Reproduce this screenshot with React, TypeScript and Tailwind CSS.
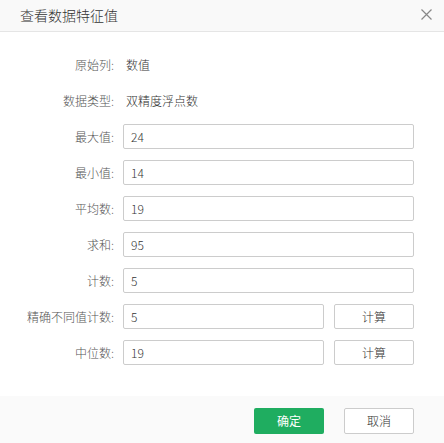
import React from "react";

const font = { fontFamily: '"Noto Sans CJK SC", "Noto Sans", sans-serif' };

function Label({ children }: { children: React.ReactNode }) {
  return <div className="w-[115px] shrink-0 text-right text-[12px] font-light text-[#555] pr-[1px]">{children}</div>;
}

function InputRow({ label, value, calc }: { label: string; value: string; calc?: boolean }) {
  return (
    <div className="flex h-[25px] items-center gap-[8px]">
      <Label>{label}</Label>
      <div className="flex flex-1 gap-[10px]">
        <div className="flex h-[25px] flex-1 items-center rounded-[2px] border border-[#cccccc] bg-white pl-[7px] text-[12px] font-light text-[#333]">
          {value}
        </div>
        {calc && (
          <button className="flex h-[25px] w-[80px] items-center justify-center rounded-[2px] border border-[#cccccc] bg-white text-[12px] font-light text-[#333]">
            计算
          </button>
        )}
      </div>
    </div>
  );
}

function TextRow({ label, value }: { label: string; value: string }) {
  return (
    <div className="flex h-[25px] items-center gap-[8px]">
      <Label>{label}</Label>
      <div className="pl-[3px] text-[12px] font-light text-[#333]">{value}</div>
    </div>
  );
}

export default function App() {
  return (
    <div className="flex h-[443px] w-[444px] flex-col bg-white" style={font}>
      <div className="flex h-[32px] items-center justify-between border-b border-[#e5e5e5] bg-[#f9f9f9] pl-[20px] pr-[12px]">
        <span className="text-[14px] font-light text-[#333]">查看数据特征值</span>
        <svg width="11" height="11" viewBox="0 0 11 11" className="mb-[2px]">
          <path d="M0.5 0.5 L10.5 10.5 M10.5 0.5 L0.5 10.5" stroke="#888" strokeWidth="1.2" />
        </svg>
      </div>
      <div className="flex flex-col gap-[11px] pl-0 pr-[30px] pt-[20px]">
        <TextRow label="原始列:" value="数值" />
        <TextRow label="数据类型:" value="双精度浮点数" />
        <InputRow label="最大值:" value="24" />
        <InputRow label="最小值:" value="14" />
        <InputRow label="平均数:" value="19" />
        <InputRow label="求和:" value="95" />
        <InputRow label="计数:" value="5" />
        <InputRow label="精确不同值计数:" value="5" calc />
        <InputRow label="中位数:" value="19" calc />
      </div>
      <div className="mt-auto flex h-[47px] items-start justify-end gap-[20px] bg-[#fafafa] pr-[30px] pt-[12px]">
        <button className="flex h-[26px] w-[70px] items-center justify-center rounded-[2px] bg-[#1fad60] text-[12px] text-white">
          确定
        </button>
        <button className="flex h-[26px] w-[70px] items-center justify-center rounded-[2px] border border-[#cccccc] bg-white text-[12px] font-light text-[#333]">
          取消
        </button>
      </div>
    </div>
  );
}
